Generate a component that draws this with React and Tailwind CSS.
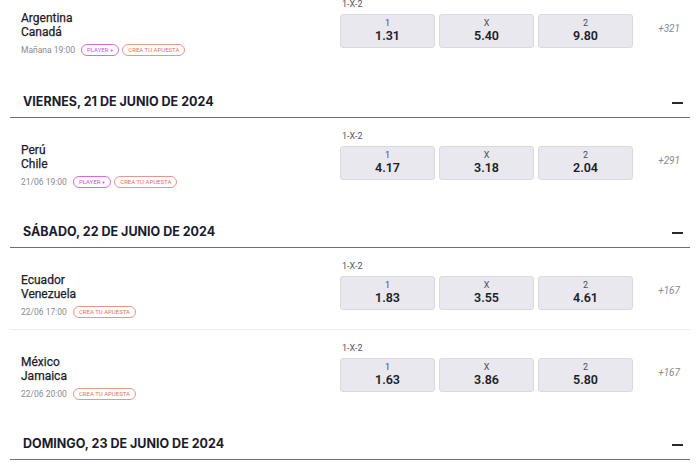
import React from 'react';

const days = [
  {
    title: null,
    matches: [
      { home: 'Argentina', away: 'Canadá', time: 'Mañana 19:00', player: true, odds: ['1.31', '5.40', '9.80'], more: '+321' },
    ],
  },
  {
    title: 'VIERNES, 21 DE JUNIO DE 2024',
    matches: [
      { home: 'Perú', away: 'Chile', time: '21/06 19:00', player: true, odds: ['4.17', '3.18', '2.04'], more: '+291' },
    ],
  },
  {
    title: 'SÁBADO, 22 DE JUNIO DE 2024',
    matches: [
      { home: 'Ecuador', away: 'Venezuela', time: '22/06 17:00', player: false, odds: ['1.83', '3.55', '4.61'], more: '+167' },
      { home: 'México', away: 'Jamaica', time: '22/06 20:00', player: false, odds: ['1.63', '3.86', '5.80'], more: '+167' },
    ],
  },
  {
    title: 'DOMINGO, 23 DE JUNIO DE 2024',
    matches: [],
  },
];

const labels = ['1', 'X', '2'];

function Header({ title }) {
  return (
    <div className="flex items-center justify-between pt-[24px] pb-[6px] pl-[13px] pr-[7px] border-b border-[#6e6e73]">
      <span className="text-[12.5px] leading-[18px] font-bold text-[#1b1b2e] font-['Inter',sans-serif]">
        {title}
      </span>
      <span className="block w-[11px] h-[2px] bg-[#2a2a35] mt-[1px]" />
    </div>
  );
}

function Match({ m, first, last }) {
  return (
    <div className={`flex items-start pt-[13px] ${first ? '-mt-[14px] pb-[13px]' : 'pb-[11px]'} ${last ? '' : 'border-b border-[#ededf0]'}`}>
      <div className="flex-1 pl-[11px] pt-[12px]">
        <div className="text-[12px] leading-[14px] font-normal text-[#1c1c2a] [-webkit-text-stroke:0.25px_#1c1c2a]">{m.home}</div>
        <div className="text-[12px] leading-[14px] font-normal text-[#1c1c2a] [-webkit-text-stroke:0.25px_#1c1c2a]">{m.away}</div>
        <div className="flex items-center mt-[5px] gap-[3px]">
          <span className="text-[8.5px] leading-[11px] text-[#8a8a90] mr-[3px]">{m.time}</span>
          {m.player && (
            <span className="h-[12px] px-[5px] rounded-full border border-[#d96be0] text-[#c952d0] text-[6px] leading-[10px] flex items-center">
              PLAYER +
            </span>
          )}
          <span className="h-[12px] px-[5px] rounded-full border border-[#e8958d] text-[#e0706a] text-[6px] leading-[10px] flex items-center">
            CREA TU APUESTA
          </span>
        </div>
      </div>
      <div className="w-[350px] pr-[10px]">
        <div className="text-[9px] leading-[11px] text-[#55555c] pl-[2px] mb-[4px]">1-X-2</div>
        <div className="flex items-center">
          <div className="flex gap-[4px]">
            {m.odds.map((o, i) => (
              <div
                key={i}
                className="w-[95px] h-[34px] rounded-[3px] bg-[#e8e8ee] border border-[#d9d9df] flex flex-col items-center pt-[3px]"
              >
                <span className="text-[9px] leading-[11px] text-[#4b4b55]">{labels[i]}</span>
                <span className="text-[12.5px] leading-[14px] font-semibold text-[#1d1d2a]">{o}</span>
              </div>
            ))}
          </div>
          <span className="flex-1 text-right text-[10px] italic text-[#8a8a90] mb-[6px]">{m.more}</span>
        </div>
      </div>
    </div>
  );
}

export default function App() {
  return (
    <div className="w-[700px] h-[469px] overflow-hidden bg-white font-['Roboto',sans-serif]">
      <div className="px-[10px]">
        {days.map((d, di) => (
          <div key={di}>
            {d.title && <Header title={d.title} />}
            {d.matches.map((m, mi) => (
              <Match key={mi} m={m} first={di === 0 && mi === 0} last={mi === d.matches.length - 1} />
            ))}
          </div>
        ))}
      </div>
    </div>
  );
}
